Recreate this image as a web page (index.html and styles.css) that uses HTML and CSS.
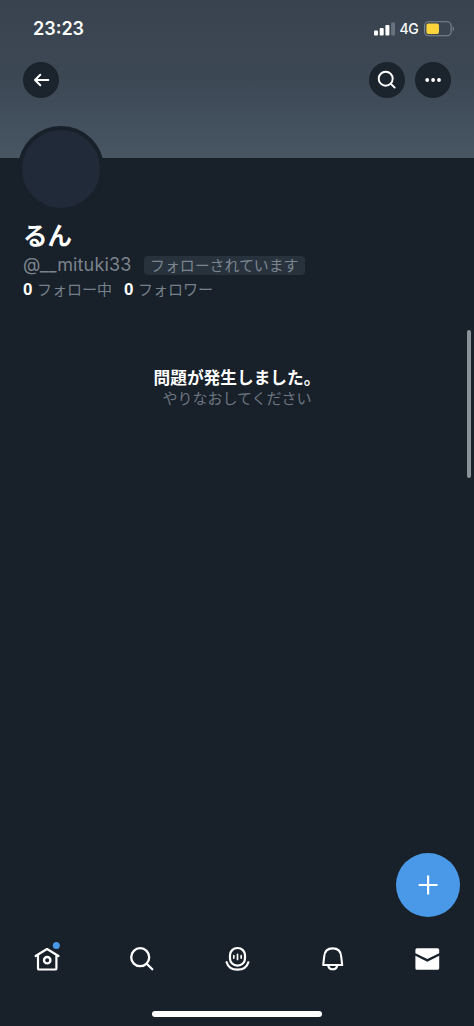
FILE: index.html
```html
<!DOCTYPE html>
<html lang="ja">
<head>
<meta charset="utf-8">
<title>るん</title>
<link rel="stylesheet" href="styles.css">
</head>
<body>
<div class="screen">
  <header class="banner">
    <div class="status">
      <span class="time">23:23</span>
      <div class="indicators">
        <svg class="signal" width="22" height="14" viewBox="0 0 22 14"><g fill="#fff"><rect x="0" y="8.5" width="4" height="5" rx="1"/><rect x="5.7" y="6" width="4" height="7.5" rx="1"/><rect x="11.4" y="3" width="4" height="10.5" rx="1"/></g><rect x="17.1" y="0.5" width="4" height="13" rx="1" fill="#66727d"/></svg>
        <span class="network">4G</span>
        <svg class="battery" width="31" height="16" viewBox="0 0 31 16"><rect x=".6" y=".8" width="26.5" height="14" rx="4" fill="none" stroke="#7b8690" stroke-width="1.1"/><rect x="2.4" y="2.6" width="12.6" height="10.4" rx="2" fill="#fbd43c"/><path d="M28.7 5.5c1.7.7 1.7 4 0 4.7z" fill="#7b8690"/></svg>
      </div>
    </div>
    <div class="actions">
      <button class="round" aria-label="戻る"><svg width="36" height="36" viewBox="0 0 36 36" fill="none" stroke="#fff" stroke-width="2" stroke-linecap="round" stroke-linejoin="round"><path d="M25.3 18H12M17.3 12.7L12 18l5.3 5.3"/></svg></button>
      <div class="group">
        <button class="round" aria-label="検索"><svg width="36" height="36" viewBox="0 0 36 36" fill="none" stroke="#fff" stroke-width="1.9" stroke-linecap="round"><circle cx="16.7" cy="16.7" r="7"/><path d="M21.8 21.8l3.9 3.8"/></svg></button>
        <button class="round" aria-label="その他"><svg width="36" height="36" viewBox="0 0 36 36" fill="#fff"><circle cx="12.2" cy="18" r="1.9"/><circle cx="18.1" cy="18" r="1.9"/><circle cx="24" cy="18" r="1.9"/></svg></button>
      </div>
    </div>
  </header>
  <section class="profile">
    <div class="avatar"></div>
    <h1 class="name">るん</h1>
    <div class="handle-row"><span class="handle">@__mituki33</span><span class="badge"><span class="badge-text">フォローされています</span></span></div>
    <div class="counts"><b>0</b><span class="label following">フォロー中</span><b>0</b><span class="label">フォロワー</span></div>
  </section>
  <main class="message">
    <p class="message-title">問題が発生しました。</p>
    <p class="message-sub">やりなおしてください</p>
  </main>
  <nav class="tabs">
    <svg width="30" height="34" viewBox="0 0 30 34" fill="none" stroke="#fff" stroke-width="2.2" stroke-linecap="round" stroke-linejoin="round"><path d="M3.6 14L15 7l11.5 7M6 13v13.4q0 1.1 1.1 1.1h16.2q1.1 0 1.1-1.1V13"/><circle cx="15.2" cy="18.2" r="3.2" stroke-width="2.4"/><circle cx="24.3" cy="3.5" r="3.5" fill="#4a99e9" stroke="none"/></svg>
    <svg width="30" height="34" viewBox="0 0 30 34" fill="none" stroke="#fff" stroke-width="2.3" stroke-linecap="round"><circle cx="13.2" cy="15.2" r="9"/><path d="M19.7 21.7l5.6 5.5"/></svg>
    <svg width="30" height="34" viewBox="0 0 30 34" fill="none" stroke="#fff" stroke-width="2.2" stroke-linecap="round"><rect x="8" y="6" width="15" height="17.7" rx="7.3"/><path d="M4.6 20.2c1.3 4.4 5.4 7.4 10.9 7.4s9.6-3 10.9-7.4"/><path d="M11.8 13.7v2.4M15.5 12.4v5M19.2 13.7v2.4" stroke-width="1.7"/></svg>
    <svg width="30" height="34" viewBox="0 0 30 34" fill="none" stroke="#fff" stroke-width="2.1" stroke-linecap="round" stroke-linejoin="round"><path d="M6.2 23l1-8.5C7.6 9.5 10.8 6.4 15.7 6.4s8.1 3.1 8.5 8.1l1 8.5z"/><path d="M11.2 23.5c.4 2.3 2.1 3.8 4.5 3.8s4.1-1.5 4.5-3.8"/></svg>
    <svg width="30" height="34" viewBox="0 0 30 34" fill="#fff"><path d="M3.4 11.3V7.9q0-1.6 1.6-1.6h20.6q1.6 0 1.6 1.6v3.4l-11.9 5.8z"/><path d="M3.4 13.7l11.9 6 11.9-6v12.5q0 1.6-1.6 1.6H5q-1.6 0-1.6-1.6z"/></svg>
  </nav>
  <div class="home-indicator"></div>
  <div class="scrollbar"></div>
  <button class="compose" aria-label="新しいメッセージ"><svg width="64" height="64" viewBox="0 0 64 64" stroke="#fff" stroke-width="2.2"><path d="M22.7 32h18.8M32.1 22.6v18.8"/></svg></button>
</div>
</body>
</html>
```
FILE: styles.css
```css
* { box-sizing: border-box; }
body {
  margin: 0;
  background: #18202a;
  color: #fff;
  font-family: Inter, "Noto Sans CJK JP", sans-serif;
}
.screen {
  position: relative;
  display: flex;
  flex-direction: column;
  width: 474px;
  height: 1026px;
  overflow: hidden;
}
.banner {
  flex: none;
  height: 158px;
  background: linear-gradient(#39434f, #3c4854 50%, #485563);
}
.status {
  display: flex;
  justify-content: space-between;
  height: 62px;
  padding: 18px 19px 0 33px;
}
.time {
  font-size: 18px;
  line-height: 22px;
  font-weight: 600;
}
.indicators { display: flex; height: 22px; align-items: center; }
.signal { margin-right: 4px; }
.network {
  width: 24.5px;
  padding-bottom: 1px;
  font-size: 14px;
  font-weight: 500;
  letter-spacing: -0.4px;
}
.actions {
  display: flex;
  justify-content: space-between;
  padding: 0 23px;
}
.group { display: flex; gap: 10px; }
.round {
  width: 36px;
  height: 36px;
  padding: 0;
  border: 0;
  border-radius: 50%;
  background: #1b232c;
}
.round svg { display: block; }
.profile { padding: 0 23px; }
.avatar {
  width: 86px;
  height: 86px;
  margin: -32px 0 0 -5px;
  border: 4px solid #18202a;
  border-radius: 50%;
  background: #212a38;
}
.name {
  margin: 8px 0 0;
  font-size: 24.5px;
  line-height: 32px;
  font-weight: 700;
}
.handle-row { display: flex; align-items: center; height: 24px; margin-top: 1px; }
.handle {
  width: 121px;
  padding-bottom: 2px;
  font-size: 18px;
  letter-spacing: 0.15px;
  color: #7c848d;
  white-space: nowrap;
}
.badge {
  display: flex;
  align-items: center;
  width: 161px;
  height: 19px;
  padding: 0 0 1px 6px;
  border-radius: 4px;
  background: #27323d;
  color: #7c858f;
  font-size: 14.9px;
  white-space: nowrap;
}
.counts {
  display: flex;
  align-items: center;
  height: 22px;
  font-size: 15px;
}
.counts b {
  width: 14px;
  padding-top: 4px;
  font-family: "Liberation Sans", sans-serif;
  font-size: 17px;
  font-weight: 700;
}
.label { color: #76808a; }
.following { width: 87px; }
.message { flex: 1; padding-top: 67px; text-align: center; }
.message p { margin: 0; }
.message-title { font-size: 16.7px; line-height: 24px; font-weight: 700; }
.message-sub { font-size: 15px; line-height: 18px; color: #6d7680; }
.tabs {
  flex: none;
  display: grid;
  grid-template-columns: repeat(5, 1fr);
  justify-items: center;
  height: 69px;
}
.home-indicator {
  flex: none;
  width: 170px;
  height: 6px;
  margin: 0 auto 9px;
  border-radius: 3px;
  background: #fff;
}
.scrollbar {
  position: absolute;
  top: 330px;
  right: 3px;
  width: 4px;
  height: 148px;
  border-radius: 2px;
  background: #8a9299;
}
.compose {
  position: absolute;
  right: 14px;
  bottom: 109px;
  width: 64px;
  height: 64px;
  padding: 0;
  border: 0;
  border-radius: 50%;
  background: #4a99e9;
}
.compose svg { display: block; }
```
